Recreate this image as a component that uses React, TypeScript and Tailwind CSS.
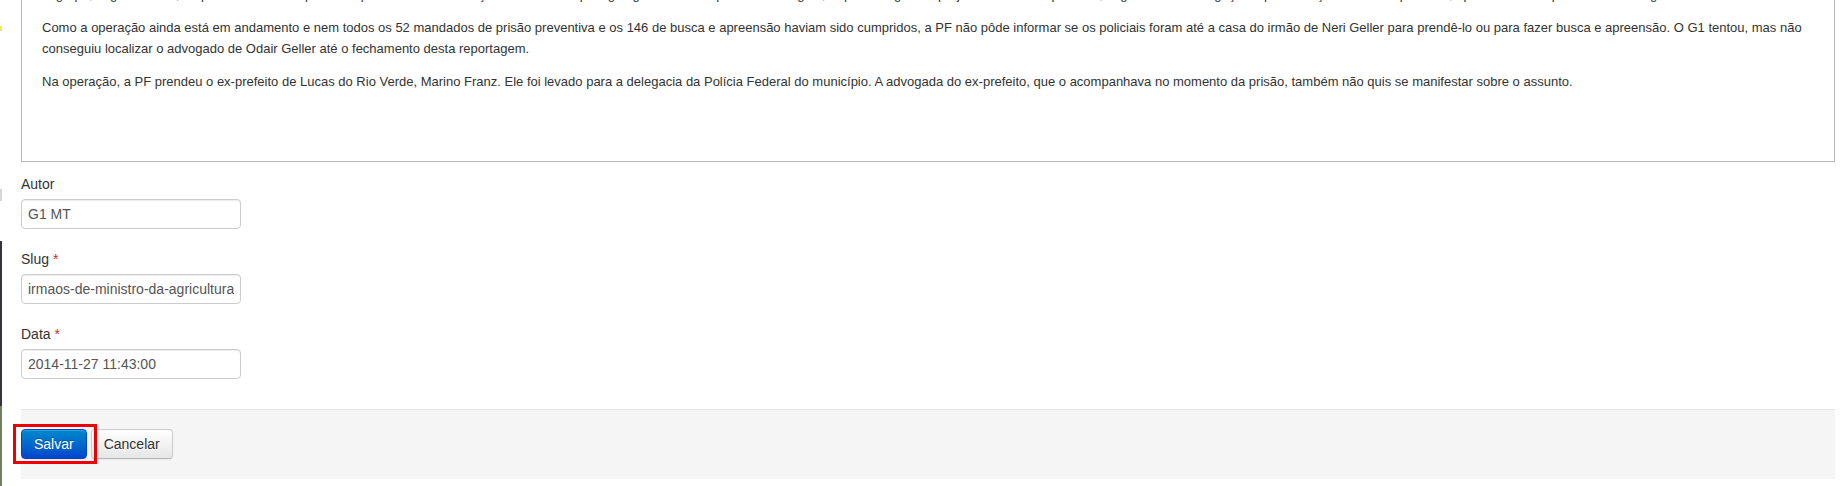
const fontArial = "[font-family:'Liberation_Sans',Arial,Helvetica,sans-serif]";

const paragraphs = [
  'Como a operação ainda está em andamento e nem todos os 52 mandados de prisão preventiva e os 146 de busca e apreensão haviam sido cumpridos, a PF não pôde informar se os policiais foram até a casa do irmão de Neri Geller para prendê-lo ou para fazer busca e apreensão. O G1 tentou, mas não conseguiu localizar o advogado de Odair Geller até o fechamento desta reportagem.',
  'Na operação, a PF prendeu o ex-prefeito de Lucas do Rio Verde, Marino Franz. Ele foi levado para a delegacia da Polícia Federal do município. A advogada do ex-prefeito, que o acompanhava no momento da prisão, também não quis se manifestar sobre o assunto.',
];

// last line of the previous paragraph, scrolled almost out of view
const hiddenLine =
  'O grupo, segundo a PF, é apontado como responsável por fraudes em licenças ambientais e pela grilagem de terras públicas na região, o que teria gerado prejuízo aos cofres públicos, segundo as investigações que começaram no ano passado, após denúncia apresentada ao órgão.';

type FieldProps = { label: string; value: string; required?: boolean };

const Field = ({ label, value, required }: FieldProps) => (
  <div className="mb-[20px]">
    <label className="block mb-[5px] text-[14px] leading-[20px] text-[#333]">
      {label}
      {required && <span className="text-[#c9302c]"> *</span>}
    </label>
    <input
      readOnly
      value={value}
      className={`block w-[220px] h-[30px] px-[6px] py-[4px] text-[14px] leading-[20px] text-[#555] bg-white border border-[#ccc] rounded-[4px] shadow-[inset_0_1px_1px_rgba(0,0,0,0.075)] outline-none ${fontArial}`}
    />
  </div>
);

export default function App() {
  return (
    <div className={`relative flex w-full h-[486px] overflow-hidden bg-white ${fontArial}`}>
      {/* edge of the window behind */}
      <div className="flex flex-col w-[2px] shrink-0">
        <div className="h-[26px]" />
        <div className="h-[5px] bg-[#f3e36a]" />
        <div className="h-[158px]" />
        <div className="h-[12px] bg-[#d6d6d6]" />
        <div className="h-[40px]" />
        <div className="h-[165px] bg-[#34343c]" />
        <div className="flex-1 bg-[#6f7f5f]" />
      </div>

      <div className="ml-[19px] w-[1814px] shrink-0">
        {/* editor body, scrolled */}
        <div className="h-[162px] overflow-hidden border-x border-b border-[#b9b9b9] pl-[20px] pr-[20px] text-[13px] leading-[21px] text-[#333]">
          <p className="-mt-[16px] mb-[12px] whitespace-nowrap">{hiddenLine}</p>
          {paragraphs.map((p, i) => (
            <p key={i} className="mb-[12px]">
              {p}
            </p>
          ))}
        </div>

        <div className="mt-[12px]">
          <Field label="Autor" value="G1 MT" />
          <Field label="Slug" value="irmaos-de-ministro-da-agricultura" required />
          <Field label="Data" value="2014-11-27 11:43:00" required />
        </div>

        <div className="mt-[30px] h-[70px] border-t border-[#e5e5e5] bg-[#f5f5f5] pt-[19px] flex items-start gap-[4px]">
          <div className="relative">
            <button className="block h-[30px] px-[12px] rounded-[4px] border border-[#0044cc] bg-gradient-to-b from-[#0088cc] to-[#0044cc] text-white text-[14px] leading-[20px] [text-shadow:0_-1px_0_rgba(0,0,0,0.25)] shadow-[inset_0_1px_0_rgba(255,255,255,0.2),0_1px_2px_rgba(0,0,0,0.05)]">
              Salvar
            </button>
            <span className="absolute -left-[8px] -right-[10px] -top-[5px] -bottom-[5px] z-10 border-[3px] border-[#ee0000] pointer-events-none" />
          </div>
          <button className="block h-[30px] px-[12px] rounded-[4px] border border-[#ccc] border-b-[#b3b3b3] bg-gradient-to-b from-white to-[#e6e6e6] text-[#333] text-[14px] leading-[20px] [text-shadow:0_1px_1px_rgba(255,255,255,0.75)] shadow-[inset_0_1px_0_rgba(255,255,255,0.2),0_1px_2px_rgba(0,0,0,0.05)]">
            Cancelar
          </button>
        </div>
      </div>
    </div>
  );
}
